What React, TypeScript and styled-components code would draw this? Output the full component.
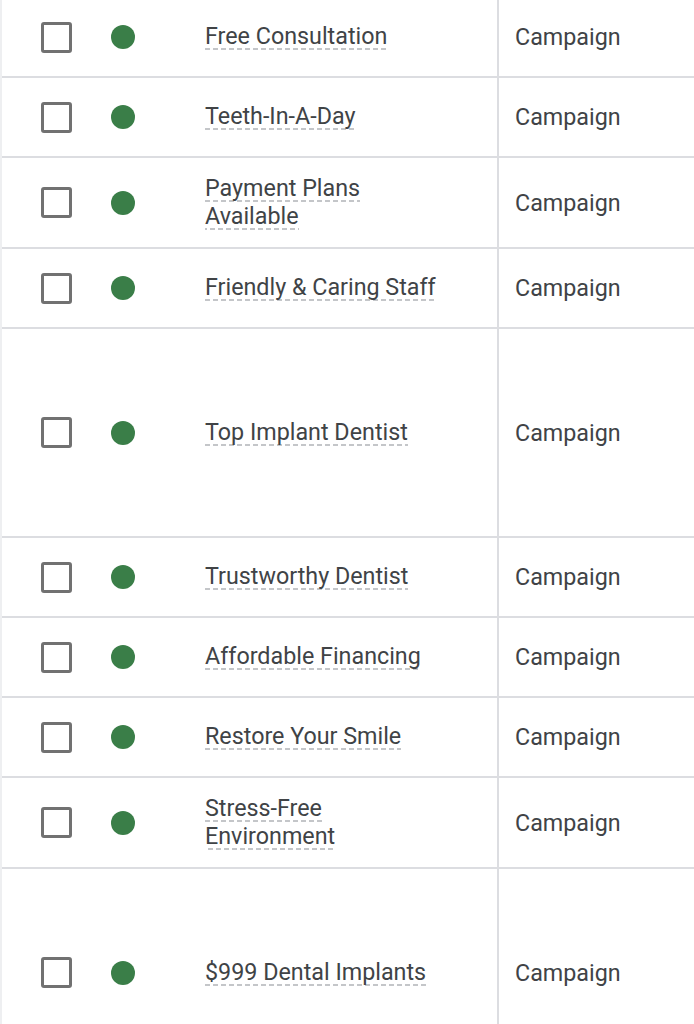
import React from "react";
import styled, { createGlobalStyle } from "styled-components";

const Global = createGlobalStyle`
  html, body { margin: 0; padding: 0; background: #ffffff; }
  body { font-family: Roboto, "Noto Sans", Arial, sans-serif; overflow: hidden; }
`;

const Table = styled.div`
  display: flex;
  flex-direction: column;
  border-left: 2px solid #eeeff1;
  margin-top: -2px;
`;

const Row = styled.div<{ $tall?: boolean }>`
  display: grid;
  grid-template-columns: 109px 94px 294px 1fr;
  min-height: ${(p) => (p.$tall ? 207 : 78)}px;
  border-bottom: 2px solid #dcdde1;
`;

const Cell = styled.div`
  display: flex;
  align-items: center;
  padding: 17px 0;
  box-sizing: border-box;
`;

const CheckCell = styled(Cell)`
  padding-left: 39px;
`;

const NameCell = styled(Cell)`
  padding-right: 50px;
  border-right: 2px solid #dcdde1;
`;

const TypeCell = styled(Cell)`
  padding-left: 16px;
`;

const Checkbox = styled.span`
  display: block;
  width: 31px;
  height: 31px;
  box-sizing: border-box;
  border: 3px solid #717171;
  border-radius: 3px;
  background: #fff;
`;

const Dot = styled.span`
  display: block;
  width: 24px;
  height: 24px;
  border-radius: 50%;
  background: #3a7e48;
`;

const NameText = styled.div`
  font-size: 23.3px;
  line-height: 27.5px;
  color: #404346;
`;

const Dashed = styled.span`
  background-image: linear-gradient(to right, #c4c6c9 0 5px, transparent 5px 8px);
  background-size: 8px 2px;
  background-repeat: repeat-x;
  background-position: 0 100%;
`;

const TypeText = styled.div`
  font-size: 23.3px;
  color: #404346;
`;

const rows: { name: string; tall?: boolean }[] = [
  { name: "Free Consultation" },
  { name: "Teeth-In-A-Day" },
  { name: "Payment Plans Available" },
  { name: "Friendly & Caring Staff" },
  { name: "Top Implant Dentist", tall: true },
  { name: "Trustworthy Dentist" },
  { name: "Affordable Financing" },
  { name: "Restore Your Smile" },
  { name: "Stress-Free Environment" },
  { name: "$999 Dental Implants", tall: true },
];

export default function App() {
  return (
    <>
      <Global />
      <Table>
        {rows.map((r) => (
          <Row key={r.name} $tall={r.tall}>
            <CheckCell>
              <Checkbox />
            </CheckCell>
            <Cell>
              <Dot />
            </Cell>
            <NameCell>
              <NameText>
                <Dashed>{r.name}</Dashed>
              </NameText>
            </NameCell>
            <TypeCell>
              <TypeText>Campaign</TypeText>
            </TypeCell>
          </Row>
        ))}
      </Table>
    </>
  );
}
